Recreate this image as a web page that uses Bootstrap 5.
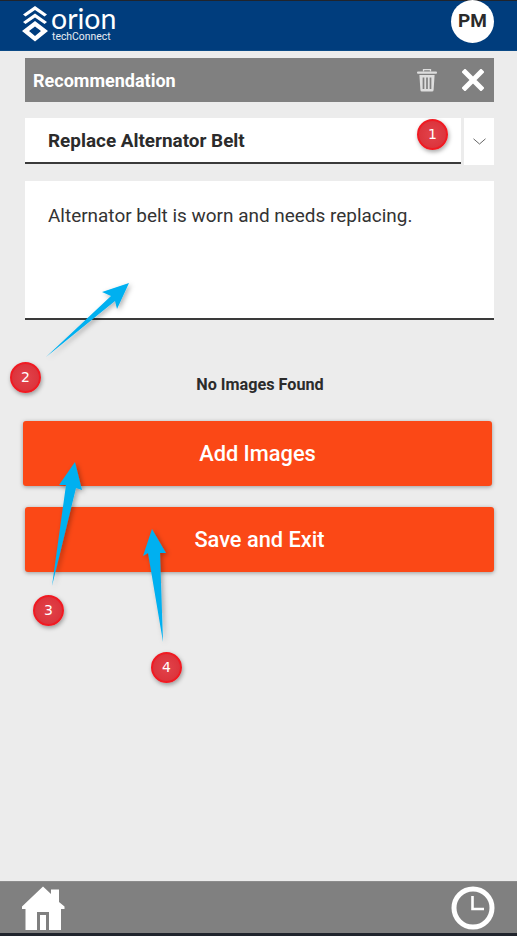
<!DOCTYPE html>
<html lang="en">
<head>
<meta charset="utf-8">
<title>Recommendation</title>
<link href="https://cdn.jsdelivr.net/npm/bootstrap@5.3.0/dist/css/bootstrap.min.css" rel="stylesheet">
<style>
html,body{height:936px;overflow:hidden}
body{background:#ececec;font-family:Roboto,"Liberation Sans",sans-serif;color:#2b2b2b}
.screen{height:936px;position:relative}
.topline{height:1px;background:#20242c}
.appbar{height:50px;background:#003d7d;padding:0 23px 0 22px;border-bottom:1px solid #0b4a86}
.brand{width:94px;height:40px;margin-top:4px}
.brand-word{font-family:Lato,"Open Sans",sans-serif;font-size:28.5px;line-height:24px;color:#fff;position:absolute;left:29px;top:1px}
.brand-sub{font-size:10.4px;line-height:10px;color:#e8edf3;position:absolute;left:30px;top:27px}
.avatar{width:43px;height:43px;background:#fff;color:#2b2b2b;font-size:19px;font-weight:700;margin-top:-1px}
.content{padding:7px 23px 0 25px}
.titlebar{height:44px;background:#808080;color:#fff;padding:0 10px 0 8px;font-size:18px;font-weight:700}
.title-icons{gap:25px}
.pickrow{margin-top:16px;height:47px;gap:3px}
.pickfield{flex:1;background:#fff;border-bottom:2px solid #3a3a3a;padding:0 23px;font-size:18.9px;font-weight:700;line-height:45px;height:46px}
.pickchev{width:30px;height:47px;background:#fff}
.notefield{margin-top:16px;height:139px;background:#fff;border-bottom:2px solid #3a3a3a;padding:23px 23px;font-size:18.95px;line-height:24px;color:#333}
.noimg{margin-top:55px;text-align:center;font-size:16.2px;font-weight:700;line-height:19px;width:470px}
.act{background:#fb4816;border:0;color:#fff;height:65px;width:469px;padding-top:8px;font-size:21.8px;font-weight:500;border-radius:3px;box-shadow:0 1px 4px rgba(0,0,0,.35)}
.act:hover{background:#fb4816;color:#fff}
.act-a{margin:27px 0 0 -2px}
.act-b{margin:21px 0 0 0;display:block}
.footbar{position:absolute;left:0;right:0;bottom:3px;height:52px;background:#808080;padding:0 22px;border-top:1px solid #8c8c8c}
.baseline{position:absolute;left:0;right:0;bottom:0;height:3px;background:#20242c}
.overlay{position:absolute;left:0;top:0;width:517px;height:936px;pointer-events:none}
.pin{position:absolute;width:31px;height:31px;border-radius:50%;background:radial-gradient(circle,#e2434b,#d92e36);border:2px solid #f01a22;color:#fff;font-family:"DejaVu Sans",sans-serif;font-size:14px;line-height:27px;text-align:center;box-shadow:1px 2px 4px rgba(0,0,0,.35)}
.pin-1{left:417px;top:119px}
.pin-2{left:10px;top:362px}
.pin-3{left:33px;top:595px}
.pin-4{left:151px;top:652px}
</style>
</head>
<body>
<div class="screen">
  <div class="topline"></div>
  <header class="appbar d-flex justify-content-between align-items-start">
    <div class="brand position-relative">
      <svg width="26" height="37" viewBox="0 0 26 37" class="d-block">
        <path d="M13 1 L25 9.5 L22.5 11.5 L13 5 L3.5 11.5 L1 9.5 Z" fill="#fff"/>
        <path d="M13 8.5 L25 17 L22.5 19 L13 12.5 L3.5 19 L1 17 Z" fill="#fff"/>
        <path d="M13 16 L26 26 L13 36.5 L0 26 Z M13 21.5 L7 26 L13 31 L19 26 Z" fill="#fff" fill-rule="evenodd"/>
      </svg>
      <span class="brand-word">orion</span>
      <span class="brand-sub">techConnect</span>
    </div>
    <div class="avatar rounded-circle d-flex align-items-center justify-content-center">PM</div>
  </header>
  <main class="content">
    <div class="titlebar d-flex align-items-center justify-content-between">
      <span>Recommendation</span>
      <div class="title-icons d-flex align-items-center">
        <svg width="20" height="23" viewBox="0 0 20 23">
          <path d="M6.5 2.4 V.7 H13.5 V2.4" fill="none" stroke="#dedede" stroke-width="1.3"/>
          <rect x="0" y="2.4" width="20" height="2.4" rx="1" fill="#dedede"/>
          <path d="M2.4 6 H17.6 L16.6 21 Q16.5 22.6 15 22.6 H5 Q3.5 22.6 3.4 21 Z" fill="#dedede"/>
          <path d="M6.5 8.5 V20 M10 8.5 V20 M13.5 8.5 V20" stroke="#808080" stroke-width="1.7"/>
        </svg>
        <svg width="22" height="22" viewBox="0 0 22 22"><path d="M3 3 L19 19 M19 3 L3 19" stroke="#fff" stroke-width="5" stroke-linecap="square"/></svg>
      </div>
    </div>
    <div class="pickrow d-flex">
      <div class="pickfield">Replace Alternator Belt</div>
      <div class="pickchev d-flex align-items-center justify-content-center">
        <svg width="13" height="7" viewBox="0 0 13 7"><path d="M.5 .8 L6.5 6 L12.5 .8" fill="none" stroke="#666" stroke-width="1"/></svg>
      </div>
    </div>
    <div class="notefield">Alternator belt is worn and needs replacing.</div>
    <div class="noimg">No Images Found</div>
    <button type="button" class="btn act act-a">Add Images</button>
    <button type="button" class="btn act act-b">Save and Exit</button>
  </main>
  <footer class="footbar d-flex justify-content-between align-items-center">
    <svg width="43" height="45" viewBox="0 0 43 45">
      <path fill-rule="evenodd" fill="#fff" d="M0 21.5 L21 1.5 L29 9 V4.5 H37 V17 L42.5 21.5 V24 H39 V45 H3.5 V24 H0 Z M15 27 V45 H27 V27 Z M18 30 H24 V45 H18 Z"/>
    </svg>
    <svg width="44" height="44" viewBox="0 0 44 44">
      <circle cx="22" cy="22" r="19" fill="none" stroke="#fff" stroke-width="5"/>
      <path d="M21.5 10 V23 H33" fill="none" stroke="#fff" stroke-width="2.6"/>
    </svg>
  </footer>
  <div class="baseline"></div>
  <svg class="overlay" viewBox="0 0 517 936">
    <defs><filter id="sh" x="-30%" y="-30%" width="160%" height="160%"><feDropShadow dx="2" dy="2" stdDeviation="2.5" flood-color="#000" flood-opacity=".3"/></filter></defs>
    <g fill="#00b0f0" filter="url(#sh)">
      <path d="M46 357 L111 296 L102 292 L129 283 L117 309 L115 301 Z"/>
      <path d="M52 586 L66 485 L59 485 L75 462 L82 490 L76 488 Z"/>
      <path d="M163 642 L148 553 L143 556 L152 529 L166 553 L160 553 Z"/>
    </g>
  </svg>
  <div class="pin pin-1">1</div>
  <div class="pin pin-2">2</div>
  <div class="pin pin-3">3</div>
  <div class="pin pin-4">4</div>
</div>
<script src="https://cdn.jsdelivr.net/npm/bootstrap@5.3.0/dist/js/bootstrap.bundle.min.js"></script>
</body>
</html>
